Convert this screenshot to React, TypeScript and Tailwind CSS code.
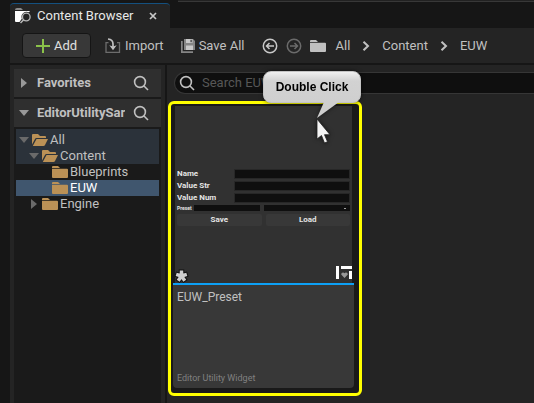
import type { ReactNode } from "react";

function SearchIcon() {
  return (
    <svg className="size-4 shrink-0" viewBox="0 0 16 16" fill="none" stroke="#c0c0c0" strokeWidth="1.6">
      <circle cx="7" cy="7" r="5.4" />
      <path d="M11 11l4 4" />
    </svg>
  );
}

function FolderIcon({ color }: { color: string }) {
  return (
    <svg className="h-3 w-4 shrink-0" viewBox="0 0 16 12" fill={color}>
      <path d="M0 1q0-1 1-1h5l2 2H0zM0 2.800h15q1 0 1 1V11q0 1-1 1H1q-1 0-1-1z" />
    </svg>
  );
}

function OpenFolderIcon() {
  return (
    <svg className="h-3 w-4 shrink-0" viewBox="0 0 16 12" fill="#bb9156">
      <path d="M0 1q0-1 1-1h5l2 2h5q1 0 1 1v1H4.500Q3.500 4 3 5L0 10.500z" />
      <path d="M4.500 5H16l-3 6q-.5 1-1.500 1H.8z" />
    </svg>
  );
}

function Caret({ open, color }: { open: boolean; color: string }) {
  return (
    <svg className="size-2.5 shrink-0" viewBox="0 0 10 10" fill={color}>
      <path d={open ? "M0 2h10L5 8z" : "M2 0l6 5-6 5z"} />
    </svg>
  );
}

function Chevron() {
  return (
    <svg className="h-2.5 w-2 shrink-0" viewBox="0 0 8 10" fill="none" stroke="#c0c0c0" strokeWidth="2">
      <path d="M1.500 .7L6 5 1.500 9.300" />
    </svg>
  );
}

function CircleArrow({ color, forward }: { color: string; forward: boolean }) {
  return (
    <svg className="size-4 shrink-0" viewBox="0 0 16 16" fill="none" stroke={color} strokeWidth="1.500">
      <circle cx="8" cy="8" r="6.700" />
      <path d={forward ? "M4 8h7.500M8.500 5l3 3-3 3" : "M12 8H4.500M7.500 5l-3 3 3 3"} />
    </svg>
  );
}

function BrowserIcon() {
  return (
    <svg className="size-4 shrink-0" viewBox="0 0 16 16">
      <path d="M0 2q0-2 2-2h4l2 2z" fill="#8a8a8a" />
      <path d="M0 3h15l-1 1.300a5.200 5.200 0 0 0-7.200 6.400L4.500 14H1q-1 0-1-1z" fill="#fff" />
      <circle cx="11.300" cy="9" r="3.800" fill="none" stroke="#b8b8b8" strokeWidth="1.300" />
      <path d="M8.600 11.700L5.500 15" stroke="#b8b8b8" strokeWidth="1.500" />
    </svg>
  );
}

function ImportIcon() {
  return (
    <svg className="h-4 w-4 shrink-0" viewBox="0 0 16 16" fill="none">
      <path d="M3.500 4.700H1v9.600h13.500V4.700H12" stroke="#6d6d6d" strokeWidth="1.300" />
      <path d="M3 1q5 .5 5 5v3" stroke="#c0c0c0" strokeWidth="1.700" />
      <path d="M4.300 7.300L8 8.500l3.700-1.200L8 12.200z" fill="#c0c0c0" />
    </svg>
  );
}

function SaveAllIcon() {
  return (
    <svg className="size-3.5 shrink-0" viewBox="0 0 14 14">
      <path d="M0 2h1.700v10.300H12V14H0z" fill="#858585" />
      <path d="M3 0h9l2 2v9H3z" fill="#858585" />
      <path d="M5 0h6.500v4H5zM5 6.500h7V11H5z" fill="#c8c8c8" />
      <path d="M9.500 .8h1.200v2.400H9.500z" fill="#333" />
    </svg>
  );
}

function PanelHeader({ title, open }: { title: string; open: boolean }) {
  return (
    <div className="flex h-7 items-center gap-2 bg-[#2f2f2f] pr-3 pl-[5px]">
      <button type="button" className="flex min-w-0 flex-1 items-center gap-2 font-bold text-[#c0c0c0]" aria-expanded={open}>
        <Caret open={open} color="#999" />
        <span className="overflow-hidden whitespace-nowrap">{title}</span>
      </button>
      <button type="button" aria-label={"Search " + title}>
        <SearchIcon />
      </button>
    </div>
  );
}

function TreeRow({ className, caret, icon, label }: { className: string; caret?: ReactNode; icon: ReactNode; label: string }) {
  return (
    <li className={"flex h-4 items-center " + className}>
      <span className="flex w-[13px] shrink-0">{caret}</span>
      {icon}
      <span className="ml-0.5 leading-4">{label}</span>
    </li>
  );
}

function Field({ id, label }: { id: string; label: string }) {
  return (
    <div className="flex h-3 items-center">
      <label htmlFor={id} className="w-[57px] shrink-0">{label}</label>
      <input id={id} className="h-2.5 min-w-0 flex-1 border border-[#272727] bg-[#0f0f0f]" />
    </div>
  );
}

function AssetCard() {
  return (
    <article className="ml-px w-[194px] rounded-md border-3 border-[#ffff00] bg-[#191919] pt-0.5 pr-[5px] pb-[5px] pl-0.5">
      <div className="mx-0.5 flex h-[177px] flex-col bg-[#313131] px-0.5 pt-[62px] text-[8px] leading-3 font-bold text-[#e4e4e4]">
        <Field id="name" label="Name" />
        <Field id="str" label="Value Str" />
        <Field id="num" label="Value Num" />
        <div className="flex h-2 items-center gap-1">
          <div className="flex min-w-0 flex-1 items-center">
            <label htmlFor="preset" className="w-[17px] shrink-0 text-[5px] leading-2">Preset</label>
            <input id="preset" className="h-1.5 min-w-0 flex-1 bg-[#0f0f0f]" />
          </div>
          <div className="flex h-1.5 min-w-0 flex-1 items-center bg-[#0f0f0f] pr-1">
            <select aria-label="Preset list" className="h-1.5 min-w-0 flex-1 appearance-none" />
            <span className="h-px w-0.5 bg-[#a0a0a0]" />
          </div>
        </div>
        <div className="mt-0.5 flex h-3 gap-1">
          <button type="button" className="flex-1 rounded-xs bg-[#383838]">Save</button>
          <button type="button" className="flex-1 rounded-xs bg-[#383838]">Load</button>
        </div>
        <div className="mt-auto -mr-0.5 -ml-0.5 flex items-end justify-between">
          <svg className="size-3.5" viewBox="0 0 14 14">
            <g stroke="#111" strokeWidth="5.500">
              <path d="M6.500 7V.5M6.500 7l6.300-2M6.500 7l4 5.500M6.500 7l-4 5.500M6.500 7L.2 5" />
            </g>
            <g stroke="#d0d0d0" strokeWidth="3.500">
              <path d="M6.500 7V1.500M6.500 7l5.300-1.600M6.500 7l3.300 4.700M6.500 7l-3.300 4.700M6.500 7L1.200 5.400" />
            </g>
          </svg>
          <svg className="mb-1 h-[13px] w-4" viewBox="0 0 16 13">
            <path d="M0 0h3v13H0zM5 0h11v3H5zM13 5h3v8h-3z" fill="#fff" />
            <path d="M8.500 12L5.200 8.500q0-2 1.800-2 1 0 1.500.8.500-.8 1.500-.8 1.800 0 1.800 2z" fill="#999" />
          </svg>
        </div>
      </div>
      <div className="flex h-[105px] flex-col justify-between rounded-b border-t-2 border-[#0da0f5] bg-[#383838] px-1 pt-1 pb-1">
        <h2 className="text-xs leading-4 text-[#c0c0c0]">EUW_Preset</h2>
        <p className="text-[9px] leading-3 text-[#808080]">Editor Utility Widget</p>
      </div>
    </article>
  );
}

function ClickCallout() {
  return (
    <div className="absolute top-1.5 left-24 w-[98px] drop-shadow-[0_0_2px_#0009]">
      <div className="flex h-8 items-center justify-center rounded-lg border border-[#c4c4c4] bg-linear-to-b from-[#f0f0f0] via-[#d2d2d2] via-30% to-[#cfcfcf] font-['Liberation_Sans',Arial,sans-serif] text-xs font-bold text-black">
        Double Click
      </div>
      <svg className="ml-[53px] h-10 w-6" viewBox="0 0 24 40" overflow="visible">
        <path d="M8 -1h15L1 15z" fill="#cfcfcf" />
        <path d="M1 16v20l4.500-3.500L8.500 40l3-1.300-3-7H14z" fill="#f4f4f4" stroke="#222" strokeWidth=".8" />
      </svg>
    </div>
  );
}

export default function App() {
  return (
    <div className="flex min-h-screen flex-col bg-[#161616] pl-2.5 font-[Roboto,sans-serif] text-[13px] text-[#c0c0c0]">
      <header className="flex h-7 items-start gap-2">
        <div className="mt-[3px] flex h-[25px] w-40 items-center rounded-t border-t border-[#14507f] bg-[#242424] pr-3 pl-[5px] text-[#e8e8e8]">
          <BrowserIcon />
          <h1 className="ml-1.5 flex-1 whitespace-nowrap">Content Browser</h1>
          <button type="button" aria-label="Close tab">
            <svg className="size-2.5" viewBox="0 0 10 10" stroke="#c8c8c8" strokeWidth="1.700">
              <path d="M2 2l6 6M8 2L2 8" />
            </svg>
          </button>
        </div>
        <div className="h-0.5 flex-1 border-b border-[#383838] bg-[#222]" />
      </header>

      <div className="flex h-[35px] items-center bg-[#242424] pl-3 whitespace-nowrap">
        <button type="button" className="flex h-[25px] w-[69px] items-center justify-center gap-1 rounded border border-[#151515] bg-[#383838] text-[#e0e0e0]">
          <svg className="size-3.5" viewBox="0 0 14 14" stroke="#8bc24a" strokeWidth="2">
            <path d="M7 0v14M0 7h14" />
          </svg>
          Add
        </button>
        <button type="button" className="ml-3.5 flex items-center gap-1">
          <ImportIcon />
          Import
        </button>
        <button type="button" className="ml-[17px] flex items-center gap-1">
          <SaveAllIcon />
          Save All
        </button>
        <button type="button" className="ml-[18px]" aria-label="Back">
          <CircleArrow color="#c8c8c8" forward={false} />
        </button>
        <button type="button" className="ml-2" aria-label="Forward">
          <CircleArrow color="#6b6b6b" forward />
        </button>
        <nav className="ml-2 flex items-center" aria-label="Path">
          <FolderIcon color="#c0c0c0" />
          <a href="#all" className="ml-[9px]">All</a>
          <span className="mx-3"><Chevron /></span>
          <a href="#content">Content</a>
          <span className="mx-3"><Chevron /></span>
          <a href="#euw">EUW</a>
        </nav>
      </div>

      <div className="mt-0.5 flex flex-1 gap-0.5">
        <aside className="w-[155px] shrink-0 border-x-4 border-t-4 border-[#242424] bg-[#1a1a1a]">
          <div className="flex flex-col gap-0.5">
            <PanelHeader title="Favorites" open={false} />
            <PanelHeader title="EditorUtilitySar" open />
          </div>
          <ul className="mx-0.5 mt-0.5">
            <TreeRow className="box-content bg-[#2b323a] pt-[3px] pl-[3px]" caret={<Caret open color="#6a6a6a" />} icon={<OpenFolderIcon />} label="All" />
            <TreeRow className="bg-[#2b323a] pl-[13px]" caret={<Caret open color="#6a6a6a" />} icon={<OpenFolderIcon />} label="Content" />
            <TreeRow className="pl-[23px]" icon={<FolderIcon color="#bb9156" />} label="Blueprints" />
            <TreeRow className="bg-[#40566e] pl-[23px] text-white" icon={<FolderIcon color="#bb9156" />} label="EUW" />
            <TreeRow className="pl-[13px]" caret={<Caret open={false} color="#6a6a6a" />} icon={<FolderIcon color="#bb9156" />} label="Engine" />
          </ul>
        </aside>

        <main className="relative min-w-0 flex-1 overflow-hidden bg-[#242424] pt-[7px]">
          <label className="mb-[7px] ml-[7px] flex h-[22px] items-center gap-[7px] rounded-l-full border border-r-0 border-[#363636] bg-[#0f0f0f] pl-1">
            <SearchIcon />
            <input className="min-w-0 flex-1 bg-transparent outline-none placeholder:text-[#575757]" placeholder="Search EUW" aria-label="Search EUW" />
          </label>
          <AssetCard />
          <ClickCallout />
        </main>
      </div>
    </div>
  );
}
